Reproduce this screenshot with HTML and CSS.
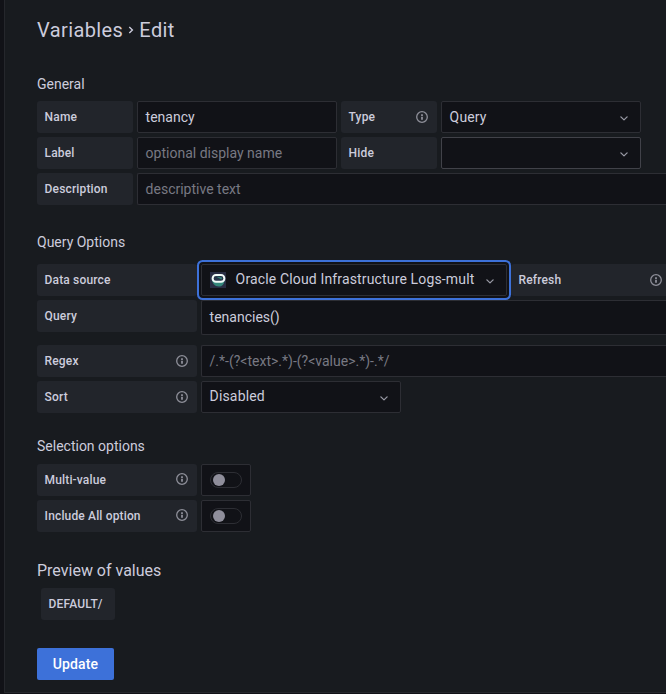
FILE: index.html
```html
<!DOCTYPE html>
<html lang="en">
<head>
<meta charset="utf-8">
<title>Variables - Edit</title>
<link rel="stylesheet" href="styles.css">
</head>
<body>
<svg class="defs" width="0" height="0" aria-hidden="true">
  <symbol id="info" viewBox="0 0 12 12"><circle cx="6" cy="6" r="5.3" fill="none" stroke="currentColor" stroke-width="1.3"/><path d="M5.100 3.200h1.800v1.700H5.100zM5.100 5.800h1.800v2.900H5.100z" fill="currentColor"/></symbol>
  <symbol id="chevron" viewBox="0 0 8 5"><path d="M.9.9 4 3.9 7.1.9" fill="none" stroke="currentColor" stroke-width="1.3" stroke-linecap="round" stroke-linejoin="round"/></symbol>
</svg>
<main class="panel">
  <h3 class="title"><span>Variables</span><svg class="crumb" viewBox="0 0 6 8"><path d="M1.3 1 4.4 4 1.3 7" fill="none" stroke="currentColor" stroke-width="1.4"/></svg><span>Edit</span></h3>

  <section class="general">
    <h5 class="heading">General</h5>
    <div class="row">
      <label class="label">Name</label>
      <div class="input medium">tenancy</div>
      <label class="label">Type<svg class="info"><use href="#info"/></svg></label>
      <div class="input medium select">Query<svg class="chevron"><use href="#chevron"/></svg></div>
    </div>
    <div class="row">
      <label class="label">Label</label>
      <div class="input medium placeholder">optional display name</div>
      <label class="label">Hide</label>
      <div class="input medium select hovered"><svg class="chevron"><use href="#chevron"/></svg></div>
    </div>
    <div class="row">
      <label class="label">Description</label>
      <div class="input grow placeholder">descriptive text</div>
    </div>
  </section>

  <section class="query">
    <h5 class="heading">Query Options</h5>
    <div class="row">
      <label class="label wide">Data source</label>
      <div class="input source select focused">
        <svg class="logo" viewBox="0 0 16 16"><rect width="16" height="16" fill="#292d43"/><path d="M1.800 6.500C2 11 4.500 14.500 9 14.500c3 0 5-2 5.500-5.500V6z" fill="#34877b"/><rect x="2.600" y="3" width="11.800" height="6.800" rx="3.400" fill="#28354b" stroke="#f2fbf9" stroke-width="2"/><path d="M6 4.600 12 5.500 11.500 7.500z" fill="#34877b"/></svg>
        <span class="value">Oracle Cloud Infrastructure Logs-mult</span>
        <svg class="chevron"><use href="#chevron"/></svg>
      </div>
      <label class="label clipped">Refresh<svg class="info"><use href="#info"/></svg></label>
    </div>
    <div class="row query-row">
      <label class="label wide">Query</label>
      <div class="input grow tall">tenancies()</div>
    </div>
    <div class="row">
      <label class="label wide">Regex<svg class="info"><use href="#info"/></svg></label>
      <div class="input grow placeholder">/.*-(?&lt;text&gt;.*)-(?&lt;value&gt;.*)-.*/</div>
    </div>
    <div class="row">
      <label class="label wide">Sort<svg class="info"><use href="#info"/></svg></label>
      <div class="input medium select"><span class="value">Disabled</span><svg class="chevron"><use href="#chevron"/></svg></div>
    </div>
  </section>

  <section class="selection">
    <h5 class="heading">Selection options</h5>
    <div class="row">
      <label class="label wide raised">Multi-value<svg class="info"><use href="#info"/></svg></label>
      <div class="input toggle"><span class="track"><span class="knob"></span></span></div>
    </div>
    <div class="row">
      <label class="label wide raised">Include All option<svg class="info"><use href="#info"/></svg></label>
      <div class="input toggle"><span class="track"><span class="knob"></span></span></div>
    </div>
  </section>

  <section class="preview">
    <h5 class="preview-heading">Preview of values</h5>
    <span class="label chip">DEFAULT/</span>
  </section>
  <button class="button" type="button">Update</button>
</main>
</body>
</html>
```
FILE: styles.css
```css
* { box-sizing: border-box; }
body {
  margin: 0;
  height: 694px;
  padding-left: 4px;
  overflow: hidden;
  background: #111217;
  color: #ccccdc;
  font: 400 14px/22px Roboto, "Liberation Sans", sans-serif;
}
.defs { display: none; }
h3, h5 { margin: 0; font-weight: 400; }
.panel {
  height: 693px;
  padding: 16px 0 0 32px;
  background: #181b1f;
  border: 1px solid #25272c;
  border-width: 0 0 1px 1px;
}
.title {
  display: flex;
  align-items: center;
  height: 28px;
  font-size: 20px;
  line-height: 28px;
  letter-spacing: 0.4px;
}
.crumb { width: 6px; height: 8px; margin: 0 5px 0 5px; }
.general { padding-top: 29px; }
.heading { height: 28px; font-size: 14px; line-height: 22px; }
.query { padding-top: 22px; }
.query .heading { height: 33px; }
.selection { padding-top: 18px; }
.selection .heading { height: 29px; }
.row { display: flex; gap: 4px; height: 32px; margin-bottom: 4px; }
.query-row { height: 35px; margin-bottom: 10px; }
.label {
  display: flex;
  flex: none;
  align-items: center;
  justify-content: space-between;
  width: 96px;
  height: 32px;
  padding: 0 9px 0 7.6px;
  border-radius: 3px;
  background: #22252b;
  font-size: 12px;
  font-weight: 500;
  letter-spacing: 0.15px;
}
.wide { width: 160px; }
.clipped { flex: 1; padding-right: 4px; border-radius: 3px 0 0 3px; }
.info { width: 12px; height: 12px; color: #8e8f99; }
.raised .info { margin-bottom: 2px; }
.input {
  display: flex;
  align-items: center;
  height: 32px;
  padding: 0 7.6px;
  border: 1px solid #2d2e34;
  border-radius: 2px;
  background: #111217;
  line-height: 30px;
  white-space: nowrap;
}
.medium { width: 200px; }
.grow { flex: 1; border-right: 0; border-radius: 2px 0 0 2px; }
.tall { height: 35px; padding-bottom: 2px; }
.placeholder { color: #787983; }
.select { padding-right: 12px; letter-spacing: 0.15px; }
.value { padding-bottom: 2px; line-height: 28px; }
.chevron { width: 8px; height: 5px; margin: 2px 0 0 auto; color: #9899a4; }
.hovered { border-color: #414249; }
.source { width: 306px; }
.focused { box-shadow: 0 0 0 2px #111217, 0 0 0 4px #3d71d9; position: relative; }
.logo { width: 16px; height: 16px; margin-right: 10px; }
.toggle { width: 50px; padding-left: 8px; }
.track {
  display: flex;
  align-items: center;
  width: 32px;
  height: 16px;
  padding-left: 2px;
  border: 1px solid #2d2e34;
  border-radius: 8px;
}
.knob { width: 12px; height: 12px; border-radius: 50%; background: #8f8e9b; }
.preview { padding-top: 24px; }
.preview-heading { height: 28px; font-size: 16px; line-height: 22px; }
.chip { width: 74px; margin-left: 4px; }
.button {
  display: block;
  width: 77px;
  height: 32px;
  margin-top: 28px;
  padding: 0;
  border: 0;
  border-radius: 2px;
  background: #3d71d9;
  color: #fff;
  font: 500 14px/32px Roboto, sans-serif;
  letter-spacing: 0.15px;
}
```
